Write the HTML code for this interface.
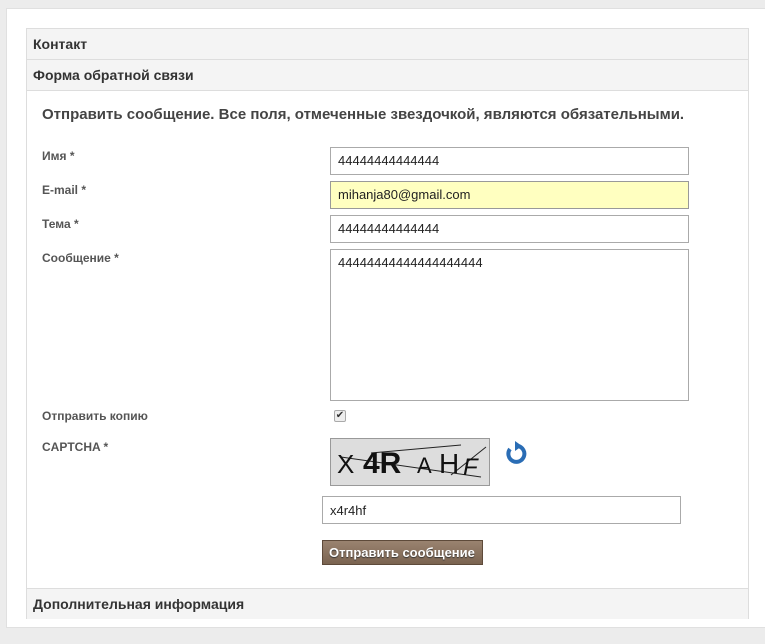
<!DOCTYPE html>
<html><head><meta charset="utf-8"><style>
*{box-sizing:border-box;margin:0;padding:0}
body{width:765px;height:644px;background:#ececec;font-family:"Liberation Sans",Arial,sans-serif;position:relative;overflow:hidden;color:#444}
.panel{position:absolute;left:6px;top:8px;width:770px;height:620px;background:#fff;border:1px solid #e0e0e0}
.box{position:absolute;left:26px;top:28px;width:723px;height:591px;border:1px solid #ddd;background:#fff}
.hd{position:absolute;left:0;width:721px;height:31px;background:#f4f4f4;border-bottom:1px solid #ddd;font-weight:bold;font-size:14px;color:#333;padding:7px 0 0 6px}
.a{position:absolute}
.lbl{font-size:12px;font-weight:bold;color:#555}
.in{position:absolute;border:1px solid #aaa;background:#fff;font-size:13px;color:#222;padding:5px 0 0 7px}
</style></head><body>
<div class="panel"></div>
<div class="box">
<div class="hd" style="top:0">Контакт</div>
<div class="hd" style="top:31px">Форма обратной связи</div>
<div class="hd" style="top:559px;border-top:1px solid #ddd;border-bottom:none">Дополнительная информация</div>
</div>
<div class="a" style="left:42px;top:106px;font-size:15px;font-weight:bold;color:#444">Отправить сообщение. Все поля, отмеченные звездочкой, являются обязательными.</div>
<div class="a lbl" style="left:42px;top:149px">Имя *</div>
<div class="a lbl" style="left:42px;top:183px">E-mail *</div>
<div class="a lbl" style="left:42px;top:217px">Тема *</div>
<div class="a lbl" style="left:42px;top:251px">Сообщение *</div>
<div class="a lbl" style="left:42px;top:409px">Отправить копию</div>
<div class="a lbl" style="left:42px;top:440px">CAPTCHA *</div>
<div class="in" style="left:330px;top:147px;width:359px;height:28px">44444444444444</div>
<div class="in" style="left:330px;top:181px;width:359px;height:28px;background:#ffffc0;border-color:#999">mihanja80@gmail.com</div>
<div class="in" style="left:330px;top:215px;width:359px;height:28px">44444444444444</div>
<div class="in" style="left:330px;top:249px;width:359px;height:152px">44444444444444444444</div>
<div class="a" style="left:334px;top:410px;width:12px;height:12px;border:1px solid #aaa;border-radius:2px;background:#eee;font-size:10px;line-height:10px;text-align:center;color:#333">✔</div>
<div class="a" style="left:330px;top:438px;width:160px;height:48px;background:#ddd;border:1px solid #999;overflow:hidden">
<svg width="160" height="48"><line x1="10" y1="18" x2="150" y2="38" stroke="#222"/><line x1="40" y1="14" x2="130" y2="6" stroke="#222"/><line x1="120" y1="36" x2="155" y2="8" stroke="#222"/>
<text x="6" y="34" font-family="Liberation Sans" font-size="26" fill="#111">X</text><text x="32" y="34" font-family="Liberation Sans" font-weight="bold" font-size="30" fill="#111">4R</text><text x="86" y="34" font-family="Liberation Sans" font-size="22" fill="#111">A</text><text x="108" y="34" font-family="Liberation Sans" font-size="28" fill="#111">H</text><text x="132" y="36" font-family="Liberation Sans" font-size="24" font-style="italic" fill="#111">F</text></svg></div>
<svg class="a" style="left:504px;top:441px" width="24" height="26" viewBox="0 0 24 26"><path d="M6 8 A8 8 0 1 0 14 5" fill="none" stroke="#2a6db5" stroke-width="4"/><path d="M11 0 L18 5 L11 10 Z" fill="#2a6db5"/></svg>
<div class="in" style="left:322px;top:496px;width:359px;height:28px;padding-top:6px">x4r4hf</div>
<div class="a" style="left:322px;top:540px;width:161px;height:25px;background:linear-gradient(#9a8370,#7a6350);border:1px solid #5e4a3a;color:#fff;font-size:13px;font-weight:bold;padding:4px 0 0 6px;text-shadow:0 1px 1px #333">Отправить сообщение</div>
</body></html>
